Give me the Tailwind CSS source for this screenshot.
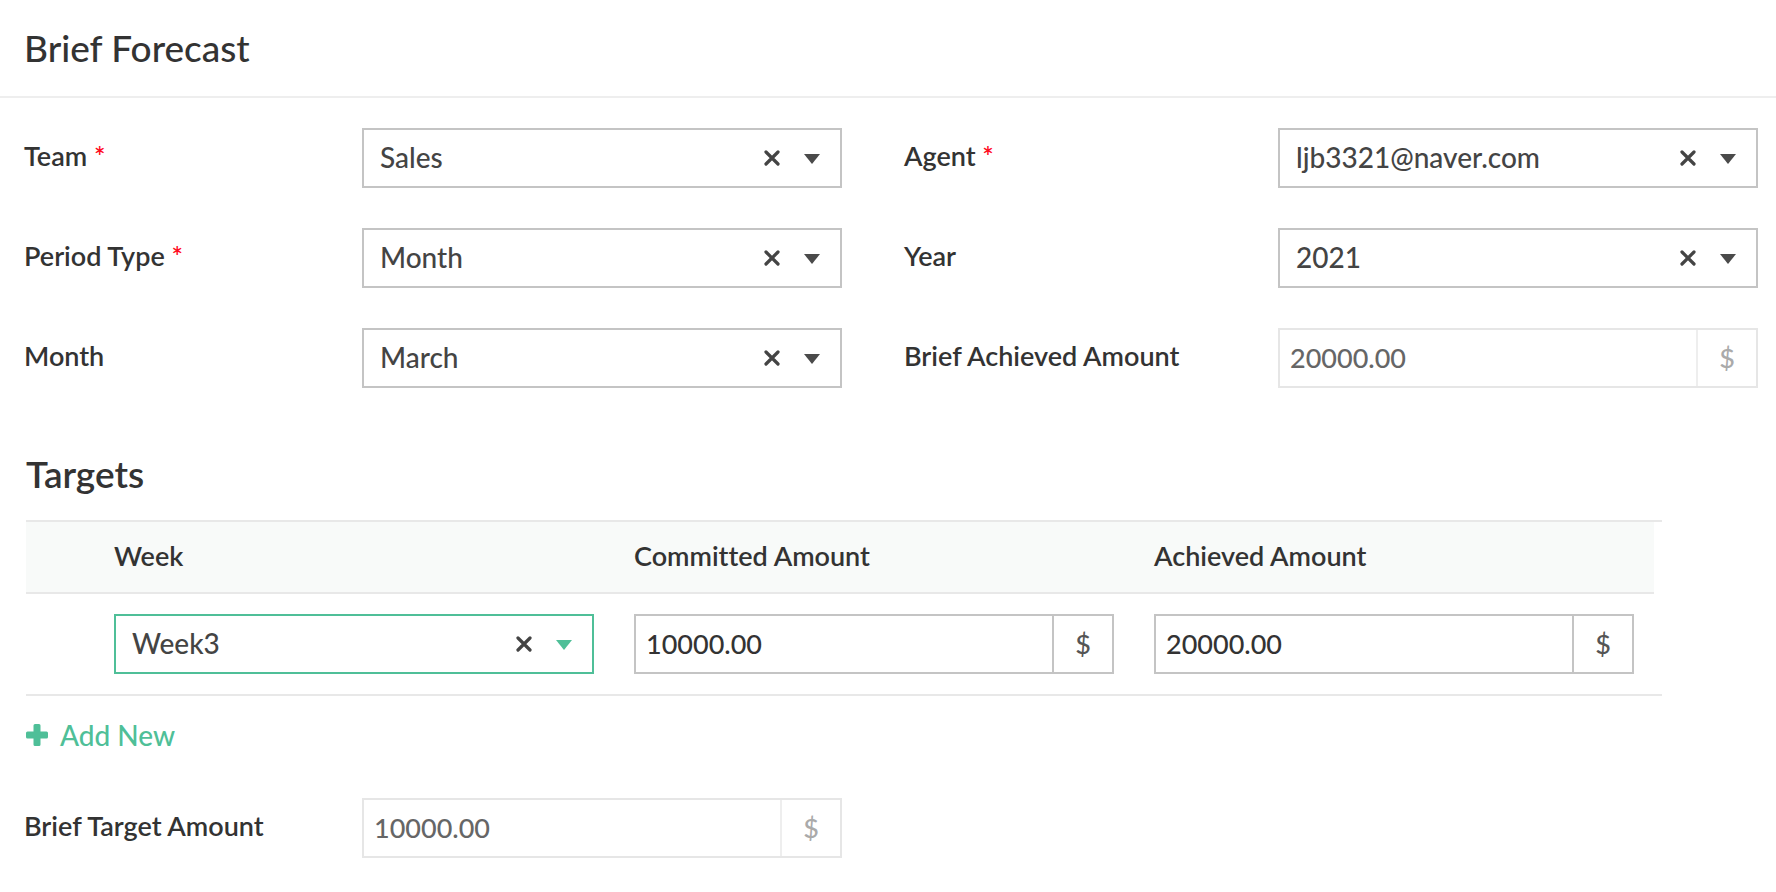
<!DOCTYPE html>
<html lang="en">
<head>
<meta charset="utf-8">
<title>Brief Forecast</title>
<script src="https://cdn.jsdelivr.net/npm/@tailwindcss/browser@4"></script>
</head>
<body class="bg-white font-['Lato',sans-serif] text-[#333] [font-variant-ligatures:none]">
<svg class="hidden" aria-hidden="true">
  <symbol id="clear" viewBox="0 0 16 16"><path d="M2 2l12 12M14 2L2 14" fill="none" stroke="currentColor" stroke-width="3.2" stroke-linecap="round"/></symbol>
  <symbol id="caret" viewBox="0 0 16 10"><path d="M0 0h16L8 10z" fill="currentColor"/></symbol>
</svg>
<header class="border-b-2 border-[#eee] px-6 pt-6 pb-6">
  <h1 class="text-[37px] leading-12 font-medium">Brief Forecast</h1>
</header>
<form class="pb-8">
  <div class="grid grid-cols-[338px_1fr_436px_1fr] items-center gap-y-10 pt-[30px] pr-[18px] pl-6">
    <label for="team" class="pb-1 text-[27px] leading-8 font-semibold">Team <span class="text-[#ff0a1e]">*</span></label>
    <div class="relative h-15 border-2 border-[#c4c4c4]">
      <select id="team" class="size-full appearance-none bg-transparent pr-24 pb-[2px] pl-4 text-[28px] font-medium text-[#444] outline-none"><option>Sales</option></select>
      <button type="button" aria-label="Clear team" class="absolute inset-y-0 right-15 text-[#444]"><svg class="size-4"><use href="#clear"/></svg></button>
      <svg class="pointer-events-none absolute top-6 right-5 h-[10px] w-4 text-[#4a4a4a]"><use href="#caret"/></svg>
    </div>
    <label for="agent" class="pb-1 pl-[62px] text-[27px] leading-8 font-semibold">Agent <span class="text-[#ff0a1e]">*</span></label>
    <div class="relative h-15 border-2 border-[#c4c4c4]">
      <select id="agent" class="size-full appearance-none bg-transparent pr-24 pb-[2px] pl-4 text-[28px] font-medium text-[#444] outline-none"><option>ljb3321@naver.com</option></select>
      <button type="button" aria-label="Clear agent" class="absolute inset-y-0 right-15 text-[#444]"><svg class="size-4"><use href="#clear"/></svg></button>
      <svg class="pointer-events-none absolute top-6 right-5 h-[10px] w-4 text-[#4a4a4a]"><use href="#caret"/></svg>
    </div>
    <label for="period" class="pb-1 text-[27px] leading-8 font-semibold">Period Type <span class="text-[#ff0a1e]">*</span></label>
    <div class="relative h-15 border-2 border-[#c4c4c4]">
      <select id="period" class="size-full appearance-none bg-transparent pr-24 pb-[2px] pl-4 text-[28px] font-medium text-[#444] outline-none"><option>Month</option></select>
      <button type="button" aria-label="Clear period type" class="absolute inset-y-0 right-15 text-[#444]"><svg class="size-4"><use href="#clear"/></svg></button>
      <svg class="pointer-events-none absolute top-6 right-5 h-[10px] w-4 text-[#4a4a4a]"><use href="#caret"/></svg>
    </div>
    <label for="year" class="pb-1 pl-[62px] text-[27px] leading-8 font-semibold">Year</label>
    <div class="relative h-15 border-2 border-[#c4c4c4]">
      <select id="year" class="size-full appearance-none bg-transparent pr-24 pb-[2px] pl-4 text-[28px] font-medium text-[#444] outline-none"><option>2021</option></select>
      <button type="button" aria-label="Clear year" class="absolute inset-y-0 right-15 text-[#444]"><svg class="size-4"><use href="#clear"/></svg></button>
      <svg class="pointer-events-none absolute top-6 right-5 h-[10px] w-4 text-[#4a4a4a]"><use href="#caret"/></svg>
    </div>
    <label for="month" class="pb-1 text-[27px] leading-8 font-semibold">Month</label>
    <div class="relative h-15 border-2 border-[#c4c4c4]">
      <select id="month" class="size-full appearance-none bg-transparent pr-24 pb-[2px] pl-4 text-[28px] font-medium text-[#444] outline-none"><option>March</option></select>
      <button type="button" aria-label="Clear month" class="absolute inset-y-0 right-15 text-[#444]"><svg class="size-4"><use href="#clear"/></svg></button>
      <svg class="pointer-events-none absolute top-6 right-5 h-[10px] w-4 text-[#4a4a4a]"><use href="#caret"/></svg>
    </div>
    <label for="achieved-total" class="pb-1 pl-[62px] text-[27px] leading-8 font-semibold">Brief Achieved Amount</label>
    <div class="flex h-15 border-2 border-[#e6e6e6]">
      <input id="achieved-total" type="text" value="20000.00" disabled class="min-w-0 flex-1 px-[10px] text-[27px] font-medium text-[#666]">
      <span class="flex w-15 items-center justify-center border-l-2 border-[#eee] text-[27px] font-medium text-[#aaa]">$</span>
    </div>
  </div>

  <section class="mt-[62px] pr-[114px] pl-[26px]">
    <h2 class="text-[37px] leading-12 font-semibold">Targets</h2>
    <div class="mt-[22px] border-y-2 border-[#e8e8e8] pr-2">
      <table class="w-full table-fixed">
        <thead>
          <tr class="h-[71px] border-b-2 border-[#e8e8e8] bg-[#f8faf9] text-left text-[27px] leading-8">
            <th class="w-[68px]"></th>
            <th id="week-h" class="px-5 pb-[2px] font-semibold">Week</th>
            <th id="committed-h" class="px-5 pb-[2px] font-semibold">Committed Amount</th>
            <th id="achieved-h" class="px-5 pb-[2px] font-semibold">Achieved Amount</th>
          </tr>
        </thead>
        <tbody>
          <tr>
            <td></td>
            <td class="p-5">
              <div class="relative h-15 border-2 border-[#4fbf98]">
                <select aria-labelledby="week-h" class="size-full appearance-none bg-transparent pr-24 pb-[2px] pl-4 text-[28px] font-medium text-[#444] outline-none"><option>Week3</option></select>
                <button type="button" aria-label="Clear week" class="absolute inset-y-0 right-15 text-[#444]"><svg class="size-4"><use href="#clear"/></svg></button>
                <svg class="pointer-events-none absolute top-6 right-5 h-[10px] w-4 text-[#4fbf98]"><use href="#caret"/></svg>
              </div>
            </td>
            <td class="p-5">
              <div class="flex h-15 border-2 border-[#c4c4c4]">
                <input type="text" value="10000.00" aria-labelledby="committed-h" class="min-w-0 flex-1 px-[10px] text-[27px] font-medium outline-none">
                <span class="flex w-15 items-center justify-center border-l-2 border-[#c4c4c4] text-[27px] font-medium text-[#555]">$</span>
              </div>
            </td>
            <td class="p-5">
              <div class="flex h-15 border-2 border-[#c4c4c4]">
                <input type="text" value="20000.00" aria-labelledby="achieved-h" class="min-w-0 flex-1 px-[10px] text-[27px] font-medium outline-none">
                <span class="flex w-15 items-center justify-center border-l-2 border-[#c4c4c4] text-[27px] font-medium text-[#555]">$</span>
              </div>
            </td>
          </tr>
        </tbody>
      </table>
    </div>
    <button type="button" class="mt-[19px] flex items-center gap-3 text-[28px] leading-10 font-medium text-[#4fbf98]">
      <svg class="size-[22px]" viewBox="0 0 22 22" fill="currentColor" aria-hidden="true"><path d="M9 0h4a1.500 1.500 0 0 1 1.500 1.500V7.500h6A1.500 1.500 0 0 1 22 9v4a1.500 1.500 0 0 1-1.500 1.500h-6v6A1.500 1.500 0 0 1 13 22H9a1.500 1.500 0 0 1-1.500-1.500v-6h-6A1.500 1.500 0 0 1 0 13V9a1.500 1.500 0 0 1 1.500-1.500h6v-6A1.500 1.500 0 0 1 9 0z"/></svg>
      Add New
    </button>
  </section>

  <div class="mt-[43px] grid grid-cols-[338px_1fr_436px_1fr] items-center pr-[18px] pl-6">
    <label for="target-total" class="pb-1 text-[27px] leading-8 font-semibold">Brief Target Amount</label>
    <div class="flex h-15 border-2 border-[#e6e6e6]">
      <input id="target-total" type="text" value="10000.00" disabled class="min-w-0 flex-1 px-[10px] text-[27px] font-medium text-[#666]">
      <span class="flex w-15 items-center justify-center border-l-2 border-[#eee] text-[27px] font-medium text-[#aaa]">$</span>
    </div>
  </div>
</form>
</body>
</html>
